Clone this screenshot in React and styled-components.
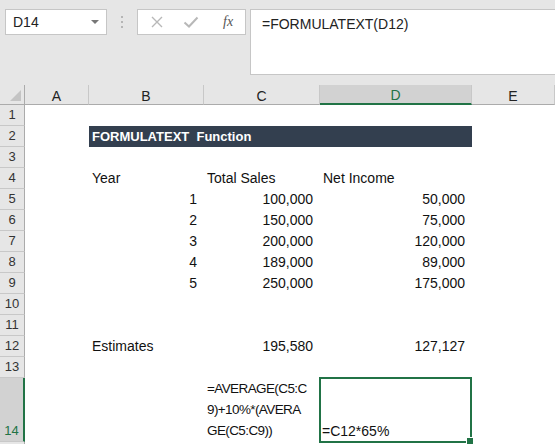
import React from "react";
import styled, { createGlobalStyle } from "styled-components";

const GlobalStyle = createGlobalStyle`
  html, body {
    margin: 0;
    padding: 0;
    background: #ffffff;
    font-family: "Liberation Sans", Arial, sans-serif;
  }
`;

const GREEN = "#217346";

const Window = styled.div`
  width: 555px;
  height: 444px;
  overflow: hidden;
  background: #ffffff;
`;

const TopBar = styled.div`
  height: 85px;
  background: #e6e6e6;
  display: flex;
  align-items: flex-start;
  padding-top: 9px;
  box-sizing: border-box;
`;

const NameBox = styled.div`
  margin-left: 5px;
  width: 102px;
  height: 26px;
  box-sizing: border-box;
  background: #fff;
  border: 1px solid #c6c6c6;
  display: flex;
  align-items: center;
  justify-content: space-between;
  padding: 0 7px 0 7px;
  font-size: 14px;
  color: #222;
`;

const Arrow = styled.span`
  width: 0;
  height: 0;
  border-left: 4px solid transparent;
  border-right: 4px solid transparent;
  border-top: 4px solid #777;
`;

const Dots = styled.div`
  width: 30px;
  height: 26px;
  display: flex;
  flex-direction: column;
  align-items: center;
  justify-content: center;
  gap: 3px;

  span {
    width: 2px;
    height: 2px;
    background: #b5b5b5;
  }
`;

const ButtonBox = styled.div`
  width: 109px;
  height: 26px;
  box-sizing: border-box;
  background: #fff;
  border: 1px solid #c6c6c6;
  display: flex;
  align-items: center;
  padding-left: 12px;
`;

const IconSlot = styled.span`
  display: flex;
  margin-left: ${(p) => p.$gap || 0}px;
`;

const Fx = styled.span`
  font-family: "Liberation Serif", serif;
  font-style: italic;
  font-size: 14px;
  color: #555;
  margin-left: 24px;
`;

const FormulaBar = styled.div`
  margin-left: 4px;
  flex: 1;
  height: 66px;
  box-sizing: border-box;
  background: #fff;
  border: 1px solid #c6c6c6;
  border-right: none;
  padding: 6px 0 0 11px;
  font-size: 14px;
  color: #222;
`;

const Sheet = styled.div`
  display: grid;
  grid-template-columns: 25px 64px 115px 116px 152px 1fr;
  grid-template-rows: 20px repeat(13, 21px) 64px 21px;
`;

const Corner = styled.div`
  background: #e6e6e6;
  border-right: 1px solid #ababab;
  border-bottom: 1px solid #ababab;
  box-sizing: border-box;
  position: relative;

  &::after {
    content: "";
    position: absolute;
    right: 3px;
    bottom: 3px;
    width: 0;
    height: 0;
    border-left: 11px solid transparent;
    border-bottom: 11px solid #c4c4c4;
  }
`;

const ColHead = styled.div`
  background: ${(p) => (p.$active ? "#d2d2d2" : "#e6e6e6")};
  border-right: 1px solid #c8c8c8;
  border-bottom: ${(p) => (p.$active ? `2px solid ${GREEN}` : "1px solid #ababab")};
  box-sizing: border-box;
  display: flex;
  align-items: center;
  justify-content: center;
  font-size: 14px;
  color: ${(p) => (p.$active ? GREEN : "#222")};
  padding-top: 2px;
`;

const RowHead = styled.div`
  grid-column: 1;
  grid-row: ${(p) => p.$row};
  background: ${(p) => (p.$active ? "#d2d2d2" : "#e6e6e6")};
  border-bottom: 1px solid #c8c8c8;
  border-right: ${(p) => (p.$active ? `2px solid ${GREEN}` : "1px solid #ababab")};
  box-sizing: border-box;
  display: flex;
  align-items: flex-end;
  justify-content: center;
  font-size: 13px;
  line-height: 20px;
  color: ${(p) => (p.$active ? GREEN : "#333")};
`;

const Cell = styled.div`
  grid-column: ${(p) => p.$col};
  grid-row: ${(p) => p.$row};
  display: flex;
  align-items: flex-end;
  justify-content: ${(p) => (p.$right ? "flex-end" : "flex-start")};
  padding: ${(p) => (p.$right ? "0 7px 0 0" : "0 0 0 3px")};
  font-size: 14px;
  line-height: 21px;
  color: #111;
  white-space: nowrap;
`;

const TitleBar = styled.div`
  grid-column: 3 / 6;
  grid-row: 3;
  background: #333f4f;
  color: #fff;
  font-weight: bold;
  font-size: 13px;
  display: flex;
  align-items: center;
  padding-left: 3px;
  white-space: pre;
`;

const Wrapped = styled.div`
  grid-column: 4;
  grid-row: 15;
  font-size: 13.5px;
  letter-spacing: -0.6px;
  line-height: 21px;
  color: #111;
  padding: 0 0 1px 3px;
  display: flex;
  flex-direction: column;
  justify-content: flex-end;
  white-space: nowrap;
`;

const Selected = styled.div`
  grid-column: 5;
  grid-row: 15;
  position: relative;
  margin: -1px 0 -1px -1px;
  border: 2px solid ${GREEN};
  box-sizing: border-box;
  display: flex;
  align-items: flex-end;
  padding: 0 0 0 1px;
  font-size: 14px;
  line-height: 20px;
  color: #111;
`;

const Handle = styled.span`
  position: absolute;
  right: -4px;
  bottom: -4px;
  width: 6px;
  height: 6px;
  background: ${GREEN};
  border: 1px solid #fff;
`;

const cols = ["A", "B", "C", "D", "E"];

const data = [
  { row: 6, n: "1", sales: "100,000", income: "50,000" },
  { row: 7, n: "2", sales: "150,000", income: "75,000" },
  { row: 8, n: "3", sales: "200,000", income: "120,000" },
  { row: 9, n: "4", sales: "189,000", income: "89,000" },
  { row: 10, n: "5", sales: "250,000", income: "175,000" },
];

const XIcon = () => (
  <svg width="14" height="14" viewBox="0 0 14 14">
    <path d="M2 2 L12 12 M12 2 L2 12" stroke="#b8b8b8" strokeWidth="1.4" fill="none" />
  </svg>
);

const CheckIcon = () => (
  <svg width="16" height="14" viewBox="0 0 16 14">
    <path d="M1.5 7.5 L6 11.5 L14.5 2.5" stroke="#b8b8b8" strokeWidth="2" fill="none" />
  </svg>
);

export default function App() {
  return (
    <Window>
      <GlobalStyle />
      <TopBar>
        <NameBox>
          D14
          <Arrow />
        </NameBox>
        <Dots>
          <span />
          <span />
          <span />
        </Dots>
        <ButtonBox>
          <IconSlot>
            <XIcon />
          </IconSlot>
          <IconSlot $gap={19}>
            <CheckIcon />
          </IconSlot>
          <Fx>fx</Fx>
        </ButtonBox>
        <FormulaBar>=FORMULATEXT(D12)</FormulaBar>
      </TopBar>
      <Sheet>
        <Corner />
        {cols.map((c) => (
          <ColHead key={c} $active={c === "D"}>
            {c}
          </ColHead>
        ))}
        {Array.from({ length: 15 }, (_, i) => (
          <RowHead key={i} $row={i + 2} $active={i === 13}>
            {i < 14 ? i + 1 : ""}
          </RowHead>
        ))}
        <TitleBar>{"FORMULATEXT  Function"}</TitleBar>
        <Cell $col={3} $row={5}>Year</Cell>
        <Cell $col={4} $row={5}>Total Sales</Cell>
        <Cell $col={5} $row={5}>Net Income</Cell>
        {data.map((d) => (
          <React.Fragment key={d.row}>
            <Cell $col={3} $row={d.row} $right>{d.n}</Cell>
            <Cell $col={4} $row={d.row} $right>{d.sales}</Cell>
            <Cell $col={5} $row={d.row} $right>{d.income}</Cell>
          </React.Fragment>
        ))}
        <Cell $col={3} $row={13}>Estimates</Cell>
        <Cell $col={4} $row={13} $right>195,580</Cell>
        <Cell $col={5} $row={13} $right>127,127</Cell>
        <Wrapped>
          <span>=AVERAGE(C5:C</span>
          <span>9)+10%*(AVERA</span>
          <span>GE(C5:C9))</span>
        </Wrapped>
        <Selected>
          =C12*65%
          <Handle />
        </Selected>
      </Sheet>
    </Window>
  );
}
